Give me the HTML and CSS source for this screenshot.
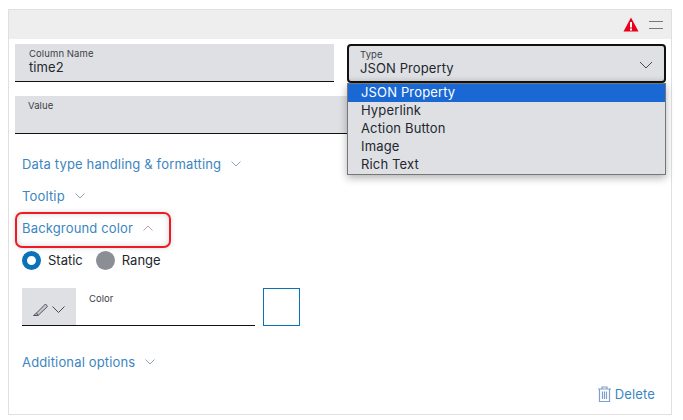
FILE: index.html
```html
<!DOCTYPE html>
<html lang="en">
<head>
    <meta charset="UTF-8">
    <title>Column settings</title>
    <link rel="stylesheet" href="styles.css">
</head>
<body>
    <div class="card">
        <div class="card-head">
            <svg class="warn" width="16" height="15" viewBox="0 0 16 15">
                <path d="M8 0.5 L15.5 14.5 H0.5 Z" fill="#e8001c"/>
                <rect x="7" y="5" width="2" height="5.5" fill="#fff"/>
                <rect x="7" y="11.5" width="2" height="2" fill="#fff"/>
            </svg>
            <span class="handle"></span>
        </div>
        <div class="card-body">
            <div class="row">
                <div class="field">
                    <div class="field-label">Column Name</div>
                    <div class="field-value">time2</div>
                </div>
                <div class="select-wrap">
                    <div class="select">
                        <div class="field-label">Type</div>
                        <div class="field-value">JSON Property</div>
                        <svg class="select-arrow" width="14" height="8" viewBox="0 0 14 8"><path d="M1 1 L7 7 L13 1" fill="none" stroke="#3d4a5c" stroke-width="1"/></svg>
                    </div>
                    <ul class="menu">
                        <li class="selected">JSON Property</li>
                        <li>Hyperlink</li>
                        <li>Action Button</li>
                        <li>Image</li>
                        <li>Rich Text</li>
                    </ul>
                </div>
            </div>
            <div class="field field-wide">
                <div class="field-label">Value</div>
            </div>
            <a class="section-link link-first">Data type handling &amp; formatting
                <svg width="10" height="6" viewBox="0 0 10 6"><path d="M0.5 0.5 L5 5 L9.5 0.5" fill="none" stroke="#8fa3b8"/></svg>
            </a>
            <a class="section-link">Tooltip
                <svg width="10" height="6" viewBox="0 0 10 6"><path d="M0.5 0.5 L5 5 L9.5 0.5" fill="none" stroke="#8fa3b8"/></svg>
            </a>
            <div class="highlight">
                <a class="section-link">Background color
                    <svg width="10" height="6" viewBox="0 0 10 6"><path d="M0.5 5.5 L5 1 L9.5 5.5" fill="none" stroke="#c99aa6"/></svg>
                </a>
            </div>
            <div class="radios">
                <span class="radio radio-on"></span><span class="radio-text">Static</span>
                <span class="radio radio-off"></span><span class="radio-text">Range</span>
            </div>
            <div class="color-row">
                <div class="color-field">
                    <div class="picker">
                        <svg width="16" height="14" viewBox="0 0 16 14"><path d="M0.5 12.5 H5 L14.5 3.5 L12.5 1 L3.5 10 Z M3.5 10 L5 12.5" fill="#c6c8d0" stroke="#4f5560"/></svg>
                        <svg width="13" height="7" viewBox="0 0 13 7"><path d="M0.5 0.5 L6.5 6.5 L12.5 0.5" fill="none" stroke="#3d4a5c"/></svg>
                    </div>
                    <div class="color-label">Color</div>
                </div>
                <div class="swatch"></div>
            </div>
            <a class="section-link link-extra">Additional options
                <svg width="10" height="6" viewBox="0 0 10 6"><path d="M0.5 0.5 L5 5 L9.5 0.5" fill="none" stroke="#8fa3b8"/></svg>
            </a>
            <div class="foot">
                <a class="delete">
                    <svg width="13" height="16" viewBox="0 0 13 16"><path d="M0 3 H13 M4 3 V1 H9 V3 M1.5 3 V15.5 H11.5 V3 M4.5 5.5 V13 M6.5 5.5 V13 M8.5 5.5 V13" fill="none" stroke="#7fa0cc" stroke-width="1.2"/></svg>
                    Delete
                </a>
            </div>
        </div>
    </div>
</body>
</html>
```

FILE: styles.css
```css
body {
    margin: 0;
    background: #fff;
    font-family: 'Inter', sans-serif;
    color: #22272e;
}
.card {
    margin: 9px 0 0 8px;
    width: 664px;
    height: 406px;
    box-sizing: border-box;
    border: 1px solid #e0e0e0;
}
.card-head {
    height: 29px;
    background: #eeeeee;
    display: flex;
    justify-content: flex-end;
    align-items: center;
    gap: 10px;
    padding-right: 8px;
}
.handle {
    width: 14px;
    height: 6px;
    border-top: 1px solid #777;
    border-bottom: 1px solid #777;
}
.card-body {
    padding: 5px 5px 0 6px;
}
.row {
    display: flex;
    gap: 13px;
    height: 39px;
}
.field {
    width: 319px;
    height: 38px;
    box-sizing: border-box;
    background: #dfe0e4;
    border-bottom: 1px solid #111;
    padding: 4px 0 0 14px;
}
.field-wide {
    width: 651px;
    margin-top: 13px;
    padding-left: 13px;
}
.field-label {
    font-size: 9.5px;
    line-height: 11px;
    letter-spacing: 0.1px;
    color: #3c4148;
}
.field-value {
    font-size: 13px;
    line-height: 16px;
    letter-spacing: 0.1px;
}
.select-wrap {
    position: relative;
    width: 319px;
}
.select {
    position: relative;
    height: 39px;
    box-sizing: border-box;
    background: #dfe0e4;
    border: 2px solid #111;
    border-radius: 4px;
    padding: 3px 0 0 11px;
    box-shadow: inset 0 -4px 4px -2px rgba(0, 0, 0, 0.08);
}
.select-arrow {
    position: absolute;
    right: 11px;
    top: 15px;
}
.menu {
    position: absolute;
    top: 39px;
    left: 0;
    right: 0;
    margin: 0;
    padding: 0;
    list-style: none;
    background: #dfe0e4;
    border: 1px solid #777;
    box-shadow: 0 3px 8px rgba(0, 0, 0, 0.3);
    font-size: 13px;
    line-height: 17px;
    letter-spacing: 0.15px;
    z-index: 5;
}
.menu li {
    padding: 0 0 1px 13px;
}
.menu li.selected {
    background: #1a68d4;
    color: #fff;
}
.section-link {
    display: flex;
    align-items: center;
    gap: 10px;
    height: 32px;
    padding-left: 7px;
    font-size: 13px;
    letter-spacing: 0.16px;
    color: #3d85c0;
}
.link-first {
    margin-top: 14px;
}
.highlight {
    width: 152px;
    height: 32px;
    border: 2px solid #f01a24;
    border-radius: 7px;
    box-shadow: inset 0 0 6px rgba(0, 0, 0, 0.15), 0 0 5px rgba(0, 0, 0, 0.15);
}
.highlight .section-link {
    height: 28px;
    padding-left: 5px;
}
.radios {
    display: flex;
    align-items: center;
    height: 24px;
    padding-left: 7px;
    font-size: 13px;
}
.radio {
    width: 19px;
    height: 19px;
    box-sizing: border-box;
    border-radius: 50%;
}
.radio-on {
    border: 5px solid #0a72b8;
    background: #fff;
}
.radio-off {
    background: #8b8e94;
}
.radio-text {
    margin: 0 13px 0 7px;
}
.color-row {
    display: flex;
    gap: 8px;
    margin: 16px 0 0 7px;
}
.color-field {
    display: flex;
    width: 233px;
    height: 38px;
    box-sizing: border-box;
    border-bottom: 1px solid #111;
}
.picker {
    width: 54px;
    background: #dfe0e4;
    display: flex;
    align-items: center;
    justify-content: center;
    gap: 3px;
    padding-top: 6px;
    box-sizing: border-box;
}
.color-label {
    font-size: 9.5px;
    line-height: 11px;
    padding: 5px 0 0 13px;
    color: #3c4148;
}
.swatch {
    width: 37px;
    height: 38px;
    box-sizing: border-box;
    border: 1px solid #0a72b8;
}
.link-extra {
    margin-top: 20px;
}
.foot {
    display: flex;
    justify-content: flex-end;
    padding-right: 11px;
    margin-top: 8px;
}
.delete {
    display: flex;
    align-items: center;
    gap: 4px;
    font-size: 13px;
    line-height: 16px;
    letter-spacing: 0.16px;
    color: #3d85c0;
}
```
